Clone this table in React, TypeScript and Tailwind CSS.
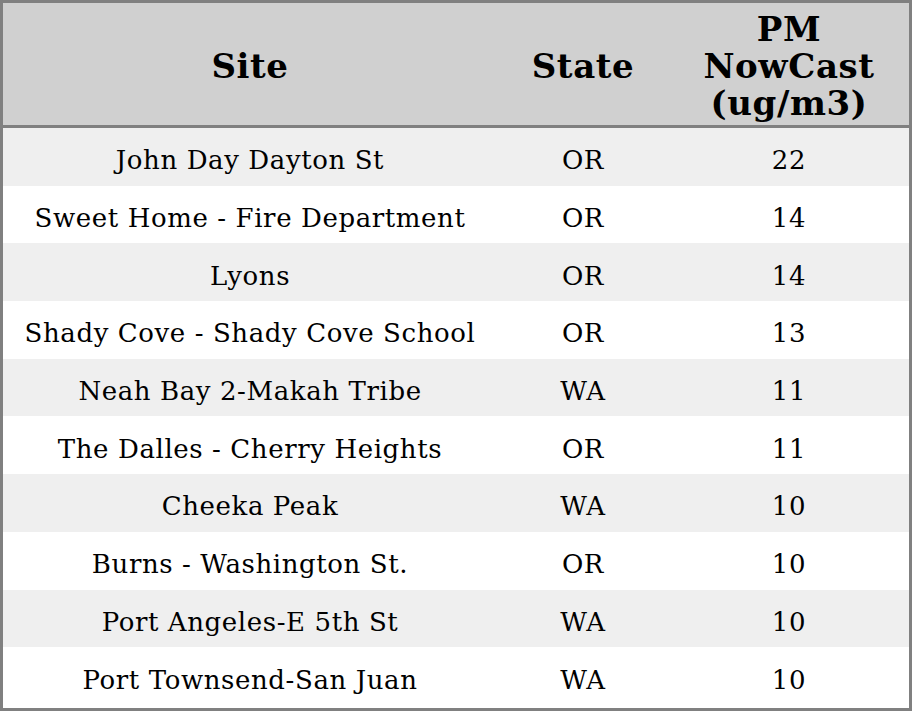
const rows: [string, string, string][] = [
  ['John Day Dayton St', 'OR', '22'],
  ['Sweet Home - Fire Department', 'OR', '14'],
  ['Lyons', 'OR', '14'],
  ['Shady Cove - Shady Cove School', 'OR', '13'],
  ['Neah Bay 2-Makah Tribe', 'WA', '11'],
  ['The Dalles - Cherry Heights', 'OR', '11'],
  ['Cheeka Peak', 'WA', '10'],
  ['Burns - Washington St.', 'OR', '10'],
  ['Port Angeles-E 5th St', 'WA', '10'],
  ['Port Townsend-San Juan', 'WA', '10'],
];

export default function App() {
  return (
    <div className="w-[912px] h-[711px] bg-white border-[3px] border-[#808080] flex flex-col font-['DejaVu_Serif',serif] text-black">
      <div className="h-[125px] shrink-0 grid grid-cols-[494px_172px_240px] items-center bg-[#d0d0d0] border-b-[3px] border-[#808080] text-[34px] font-bold leading-[37px] tracking-[0.6px] text-center pt-[4px]">
        <div>Site</div>
        <div>State</div>
        <div>
          PM
          <br />
          NowCast
          <br />
          (ug/m3)
        </div>
      </div>
      {rows.map(([site, state, value], i) => (
        <div
          key={site}
          className={
            'h-[57.7px] shrink-0 grid grid-cols-[494px_172px_240px] items-center text-center text-[26px] leading-[28px] tracking-[0.6px] pt-[7px] ' +
            (i % 2 === 0 ? 'bg-[#efefef]' : 'bg-white')
          }
        >
          <div>{site}</div>
          <div>{state}</div>
          <div>{value}</div>
        </div>
      ))}
    </div>
  );
}
